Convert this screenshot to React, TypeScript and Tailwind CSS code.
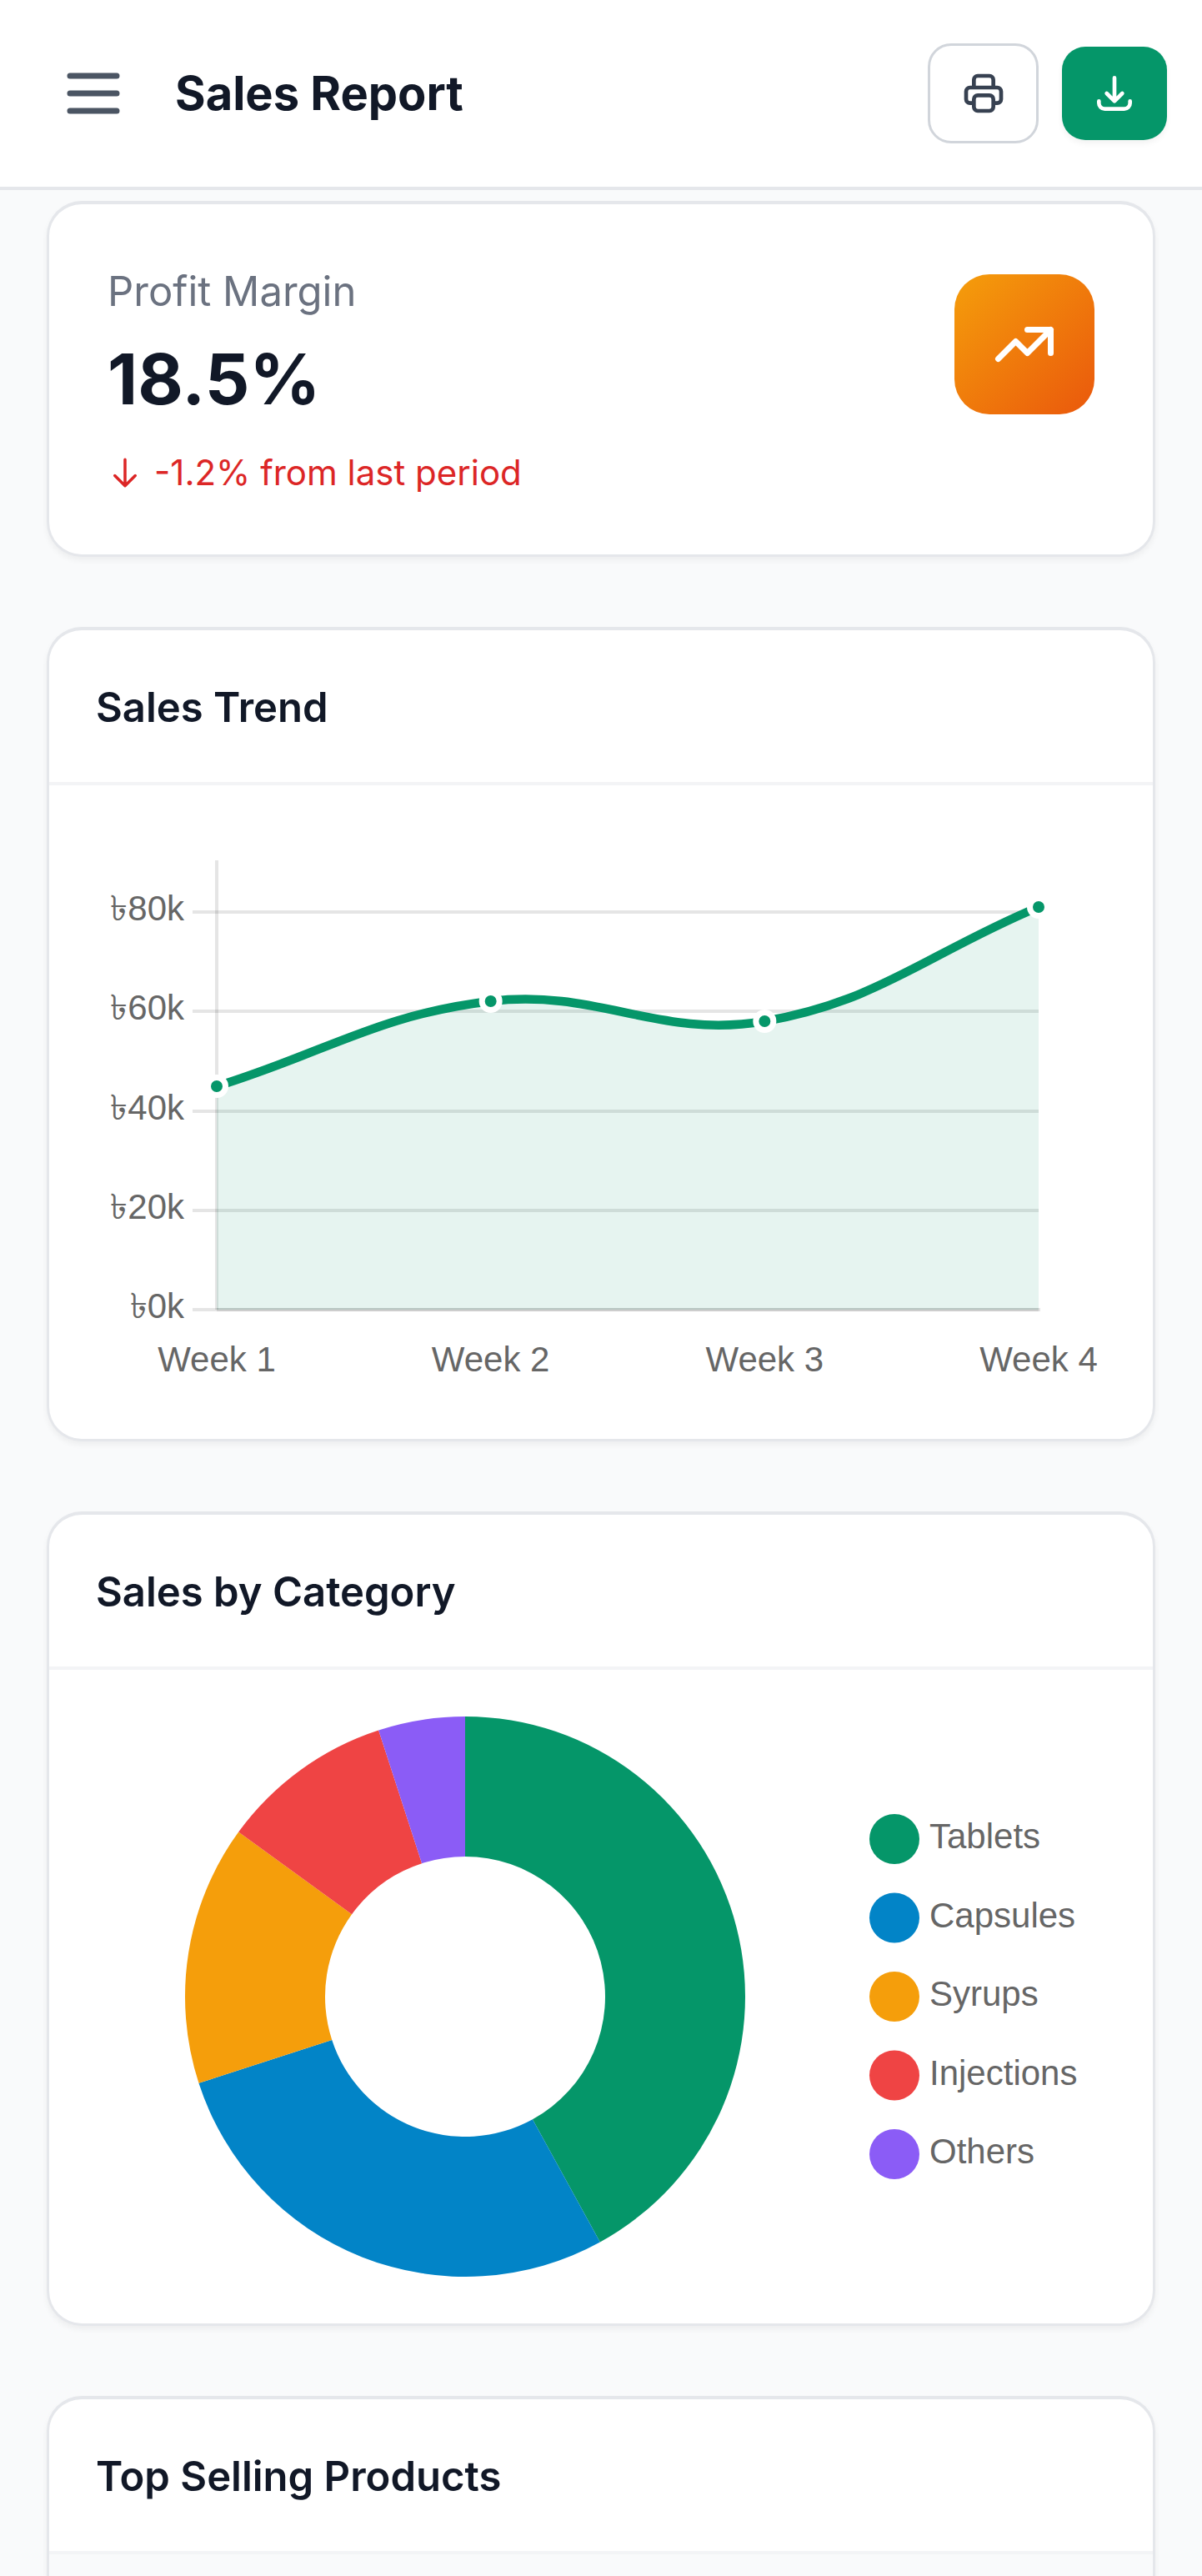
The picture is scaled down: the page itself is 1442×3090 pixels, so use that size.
import type { ReactNode } from "react"

interface Point {
  x: number
  y: number
}

const TREND = [
  { label: "Week 1", value: 45 },
  { label: "Week 2", value: 62 },
  { label: "Week 3", value: 58 },
  { label: "Week 4", value: 81 },
]

const CATEGORIES = [
  { label: "Tablets", share: 42, color: "#059669" },
  { label: "Capsules", share: 28, color: "#0284c7" },
  { label: "Syrups", share: 15, color: "#f59e0b" },
  { label: "Injections", share: 10, color: "#ef4444" },
  { label: "Others", share: 5, color: "#8b5cf6" },
]

const TICKS = [0, 20, 40, 60, 80]

// Plot area of the trend chart, in viewBox units
const PLOT = { left: 145, right: 1131, top: 34, bottom: 573 }

const toX = (index: number) => PLOT.left + (index * (PLOT.right - PLOT.left)) / (TREND.length - 1)
const toY = (value: number) => Math.round(PLOT.bottom - value * 5.96)

// Smooth cubic path through the points
function smoothPath(points: Point[], tension = 0.4) {
  const controls = points.map((p, i) => {
    const prev = points[i - 1] ?? p
    const next = points[i + 1] ?? p
    const before = Math.hypot(p.x - prev.x, p.y - prev.y)
    const after = Math.hypot(next.x - p.x, next.y - p.y)
    const a = (tension * before) / (before + after)
    const b = (tension * after) / (before + after)
    return {
      in: { x: p.x - a * (next.x - prev.x), y: p.y - a * (next.y - prev.y) },
      out: { x: p.x + b * (next.x - prev.x), y: p.y + b * (next.y - prev.y) },
    }
  })

  return points.reduce((path, p, i) => {
    if (i === 0) return `M${p.x} ${p.y}`
    const c1 = controls[i - 1].out
    const c2 = controls[i].in
    return `${path} C${c1.x} ${c1.y} ${c2.x} ${c2.y} ${p.x} ${p.y}`
  }, "")
}

function slicePath(cx: number, cy: number, outer: number, inner: number, from: number, to: number) {
  const at = (radius: number, percent: number) => {
    const angle = (percent / 100) * Math.PI * 2 - Math.PI / 2
    return `${cx + radius * Math.cos(angle)} ${cy + radius * Math.sin(angle)}`
  }
  const large = to - from > 50 ? 1 : 0
  return `M${at(outer, from)} A${outer} ${outer} 0 ${large} 1 ${at(outer, to)} L${at(inner, to)} A${inner} ${inner} 0 ${large} 0 ${at(inner, from)} Z`
}

function Icon({ d, className }: { d: string; className: string }) {
  return (
    <svg className={className} viewBox="0 0 24 24" fill="none" stroke="currentColor" aria-hidden="true">
      <path d={d} strokeWidth={2} strokeLinecap="round" strokeLinejoin="round" />
    </svg>
  )
}

function Card({ children, className = "" }: { children: ReactNode; className?: string }) {
  return (
    <section
      className={`shrink-0 overflow-hidden rounded-[42px] border-[3px] border-t-4 border-[#e5e7eb] bg-white shadow-[0_4px_7px_rgba(0,0,0,0.05)] ${className}`}
    >
      {children}
    </section>
  )
}

function CardHeader({ title }: { title: string }) {
  return (
    <div className="border-b-4 border-[#f3f4f6] px-14 pt-[58px] pb-[54px]">
      <h2 className="text-[49px] leading-[70px] font-semibold text-[#111827]">{title}</h2>
    </div>
  )
}

function TrendChart() {
  const points = TREND.map((item, i) => ({ x: toX(i), y: toY(item.value) }))
  const line = smoothPath(points)

  return (
    <svg
      className="block h-auto w-full font-['Liberation_Sans',Arial,sans-serif] text-[42px]"
      viewBox="0 0 1212 672"
      role="img"
      aria-label="Sales trend by week"
    >
      <g stroke="#000000" strokeOpacity={0.1} strokeWidth={4}>
        {TICKS.map((tick) => (
          <line key={tick} x1={116} x2={PLOT.right} y1={toY(tick)} y2={toY(tick)} />
        ))}
        <line x1={PLOT.left} x2={PLOT.left} y1={PLOT.top} y2={PLOT.bottom} />
        <line x1={PLOT.left} x2={PLOT.right + 2} y1={PLOT.bottom} y2={PLOT.bottom} />
      </g>

      <path d={`${line} L${PLOT.right} ${PLOT.bottom} L${PLOT.left} ${PLOT.bottom} Z`} fill="#059669" fillOpacity={0.1} />
      <path d={line} fill="none" stroke="#059669" strokeWidth={10.5} />
      {points.map((p, i) => (
        <circle key={TREND[i].label} cx={p.x} cy={p.y} r={10.5} fill="#059669" stroke="#ffffff" strokeWidth={7} />
      ))}

      <g fill="#666666">
        {TICKS.map((tick) => (
          <text key={tick} x={106} y={toY(tick) + 10} textAnchor="end">
            ৳{tick}k
          </text>
        ))}
        {TREND.map((item, i) => (
          <text key={item.label} x={toX(i)} y={647} textAnchor="middle">
            {item.label}
          </text>
        ))}
      </g>
    </svg>
  )
}

function CategoryChart() {
  let total = 0
  const slices = CATEGORIES.map((item) => {
    const from = total
    total += item.share
    return { ...item, from, to: total }
  })

  return (
    <svg
      className="block h-auto w-full font-['Liberation_Sans',Arial,sans-serif] text-[42px]"
      viewBox="0 0 1212 672"
      role="img"
      aria-label="Sales by category"
    >
      {slices.map((slice) => (
        <path key={slice.label} d={slicePath(443, 336, 336, 168, slice.from, slice.to)} fill={slice.color} />
      ))}
      {slices.map((slice, i) => (
        <g key={slice.label}>
          <circle cx={958} cy={147 + i * 94.5} r={30} fill={slice.color} />
          <text x={1000} y={158 + i * 94.5} fill="#666666">
            {slice.label}
          </text>
        </g>
      ))}
    </svg>
  )
}

export default function App() {
  return (
    <div className="flex h-screen flex-col overflow-hidden bg-[#f9fafb] font-['Inter',sans-serif]">
      <header className="flex h-[228px] shrink-0 items-center justify-between border-b-4 border-[#e5e7eb] bg-white px-[42px]">
        <div className="flex items-center gap-7">
          <button type="button" aria-label="Open menu" className="p-7 text-[#4b5563]">
            <Icon className="size-21" d="M4 6h16M4 12h16M4 18h16" />
          </button>
          <h1 className="text-[56px] leading-[84px] font-bold text-[#111827]">Sales Report</h1>
        </div>
        <div className="flex items-center gap-7">
          <button
            type="button"
            aria-label="Print"
            className="flex h-30 w-[133px] items-center justify-center rounded-[28px] border-[3px] border-[#d1d5db] bg-white text-[#374151]"
          >
            <Icon
              className="size-14"
              d="M17 17h2a2 2 0 002-2v-4a2 2 0 00-2-2H5a2 2 0 00-2 2v4a2 2 0 002 2h2m2 4h6a2 2 0 002-2v-4a2 2 0 00-2-2H9a2 2 0 00-2 2v4a2 2 0 002 2zm8-12V5a2 2 0 00-2-2H9a2 2 0 00-2 2v4h10z"
            />
          </button>
          <button
            type="button"
            aria-label="Export"
            className="flex h-28 w-[126px] items-center justify-center rounded-[28px] bg-[#059669] text-white shadow-[0_4px_7px_rgba(0,0,0,0.05)]"
          >
            <Icon className="size-14" d="M4 16v1a3 3 0 003 3h10a3 3 0 003-3v-1m-4-4l-4 4m0 0l-4-4m4 4V4" />
          </button>
        </div>
      </header>

      <main className="flex min-h-0 flex-1 flex-col gap-21 px-14 pt-[13px]">
        <Card className="p-[70px]">
          <div className="flex items-center justify-between">
            <div>
              <p className="text-[49px] leading-[70px] text-[#6b7280]">Profit Margin</p>
              <p className="mt-[14px] text-[84px] leading-[112px] font-bold text-[#111827]">18.5%</p>
            </div>
            <div className="flex size-42 items-center justify-center rounded-[42px] bg-[linear-gradient(to_bottom_right,#f59e0b,#ea580c)] text-white">
              <Icon className="size-21" d="M13 7h8m0 0v8m0-8l-8 8-4-4-6 6" />
            </div>
          </div>
          <p className="mt-7 flex items-center gap-[14px] text-[42px] leading-[56px] text-[#dc2626]">
            <Icon className="size-[42px]" d="M19 14l-7 7m0 0l-7-7m7 7V3" />
            <span>-1.2% from last period</span>
          </p>
        </Card>

        <Card>
          <CardHeader title="Sales Trend" />
          <div className="p-14">
            <TrendChart />
          </div>
        </Card>

        <Card>
          <CardHeader title="Sales by Category" />
          <div className="p-14">
            <CategoryChart />
          </div>
        </Card>

        <Card className="flex flex-1 flex-col rounded-b-none border-b-0">
          <CardHeader title="Top Selling Products" />
          <div className="flex-1 bg-[#f9fafb]" />
        </Card>
      </main>
    </div>
  )
}
